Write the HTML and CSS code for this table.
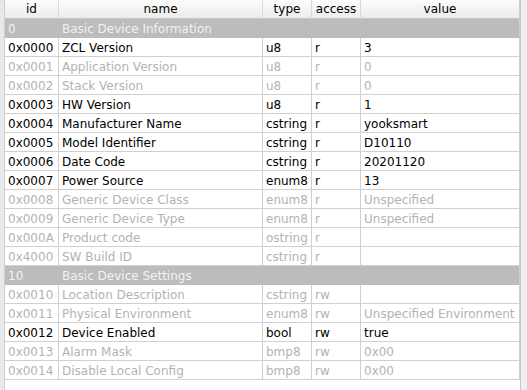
FILE: index.html
```html
<!DOCTYPE html>
<html>
<head>
<meta charset="utf-8">
<link rel="stylesheet" href="styles.css">
</head>
<body>
<div class="frame">
  <div class="side-left"></div>
  <div class="view">
    <table class="attrs">
      <colgroup>
        <col class="c-id"><col class="c-name"><col class="c-type"><col class="c-access"><col class="c-value">
      </colgroup>
      <thead>
        <tr><th>id</th><th>name</th><th>type</th><th>access</th><th>value</th></tr>
      </thead>
      <tbody>
        <tr class="group"><td>0</td><td>Basic Device Information</td><td></td><td></td><td></td></tr>
        <tr><td>0x0000</td><td>ZCL Version</td><td>u8</td><td>r</td><td>3</td></tr>
        <tr class="off"><td>0x0001</td><td>Application Version</td><td>u8</td><td>r</td><td>0</td></tr>
        <tr class="off"><td>0x0002</td><td>Stack Version</td><td>u8</td><td>r</td><td>0</td></tr>
        <tr><td>0x0003</td><td>HW Version</td><td>u8</td><td>r</td><td>1</td></tr>
        <tr><td>0x0004</td><td>Manufacturer Name</td><td>cstring</td><td>r</td><td>yooksmart</td></tr>
        <tr><td>0x0005</td><td>Model Identifier</td><td>cstring</td><td>r</td><td>D10110</td></tr>
        <tr><td>0x0006</td><td>Date Code</td><td>cstring</td><td>r</td><td>20201120</td></tr>
        <tr><td>0x0007</td><td>Power Source</td><td>enum8</td><td>r</td><td>13</td></tr>
        <tr class="off"><td>0x0008</td><td>Generic Device Class</td><td>enum8</td><td>r</td><td>Unspecified</td></tr>
        <tr class="off"><td>0x0009</td><td>Generic Device Type</td><td>enum8</td><td>r</td><td>Unspecified</td></tr>
        <tr class="off"><td>0x000A</td><td>Product code</td><td>ostring</td><td>r</td><td></td></tr>
        <tr class="off"><td>0x4000</td><td>SW Build ID</td><td>cstring</td><td>r</td><td></td></tr>
        <tr class="group"><td>10</td><td>Basic Device Settings</td><td></td><td></td><td></td></tr>
        <tr class="off"><td>0x0010</td><td>Location Description</td><td>cstring</td><td>rw</td><td></td></tr>
        <tr class="off"><td>0x0011</td><td>Physical Environment</td><td>enum8</td><td>rw</td><td>Unspecified Environment</td></tr>
        <tr><td>0x0012</td><td>Device Enabled</td><td>bool</td><td>rw</td><td>true</td></tr>
        <tr class="off"><td>0x0013</td><td>Alarm Mask</td><td>bmp8</td><td>rw</td><td>0x00</td></tr>
        <tr class="off"><td>0x0014</td><td>Disable Local Config</td><td>bmp8</td><td>rw</td><td>0x00</td></tr>
      </tbody>
    </table>
  </div>
  <div class="side-right"></div>
</div>
</body>
</html>
```
FILE: styles.css
```css
html, body {
  margin: 0;
  padding: 0;
  background: #ffffff;
}
body {
  font-family: "DejaVu Sans", sans-serif;
  font-size: 12px;
  color: #000;
}
.frame {
  display: flex;
  width: 527px;
  height: 390px;
  overflow: hidden;
}
.side-left {
  width: 4px;
  flex: none;
  background: #e8e8e8;
  border-right: 1px solid #cfcfcf;
}
.view {
  width: 515px;
  flex: none;
  background: #fff;
}
.side-right {
  flex: 1;
  background: #efefef;
  border-left: 1px solid #c9c9c9;
}
.attrs {
  border-collapse: separate;
  border-spacing: 0;
  table-layout: fixed;
  width: 515px;
}
.c-id { width: 54px; }
.c-name { width: 204px; }
.c-type { width: 49px; }
.c-access { width: 49px; }
.c-value { width: 159px; }
.attrs th {
  height: 16px;
  padding: 2px 0 0 0;
  font-weight: normal;
  text-align: center;
  line-height: 15px;
  vertical-align: top;
  background: linear-gradient(#fcfcfc, #ececec);
  border-bottom: 1px solid #c6c6c6;
  border-right: 1px solid #dadada;
  white-space: nowrap;
  overflow: hidden;
}
.attrs th:last-child { border-right: 1px solid #d0d0d0; }
.attrs td {
  height: 16px;
  padding: 2px 0 0 3px;
  line-height: 16px;
  vertical-align: top;
  border-right: 1px solid #d0d0d0;
  border-bottom: 1px solid #d0d0d0;
  white-space: nowrap;
  overflow: hidden;
}
.attrs tr.off td { color: #b3b3b3; }
.attrs tr.group td {
  background: #bcbcbc;
  color: #f2f2f2;
  border-right-color: #bcbcbc;
  border-bottom-color: #bcbcbc;
  overflow: visible;
}
.attrs tr.group td:last-child { border-right-color: #d0d0d0; }
```
